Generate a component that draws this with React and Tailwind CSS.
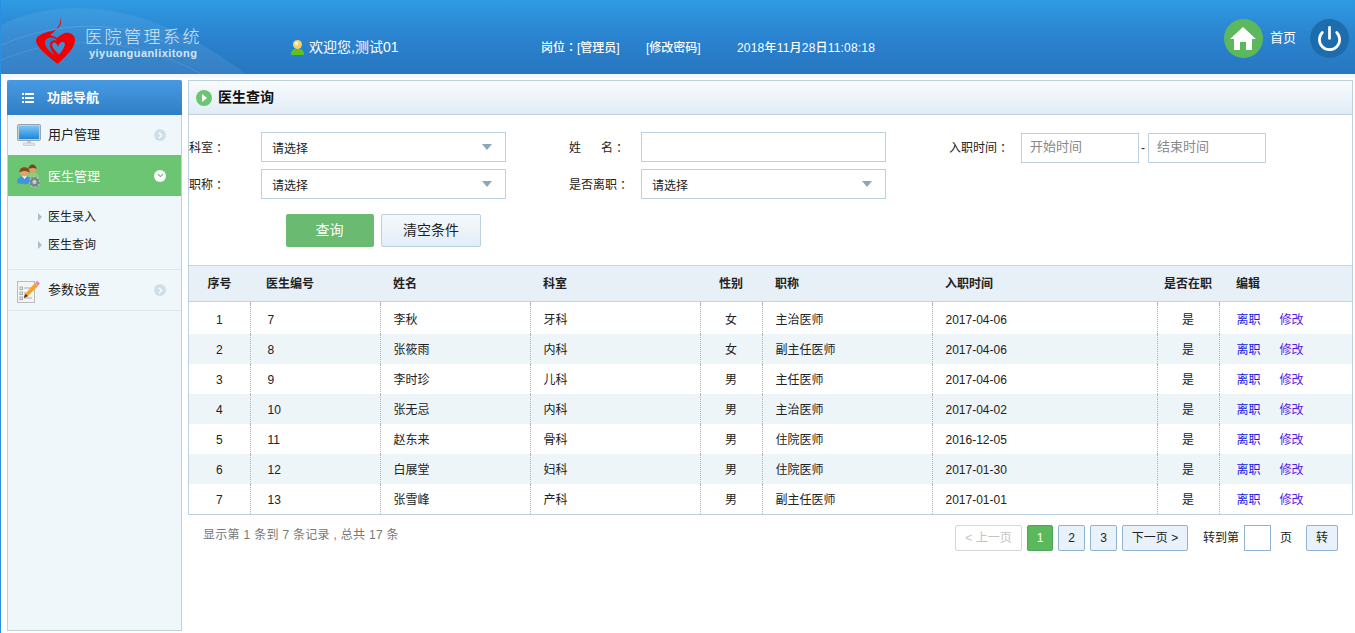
import { ChevronRight, ChevronDown, Power } from "lucide-react";

const rows = [
  [1, 7, "李秋", "牙科", "女", "主治医师", "2017-04-06"],
  [2, 8, "张筱雨", "内科", "女", "副主任医师", "2017-04-06"],
  [3, 9, "李时珍", "儿科", "男", "主任医师", "2017-04-06"],
  [4, 10, "张无忌", "内科", "男", "主治医师", "2017-04-02"],
  [5, 11, "赵东来", "骨科", "男", "住院医师", "2016-12-05"],
  [6, 12, "白展堂", "妇科", "男", "住院医师", "2017-01-30"],
  [7, 13, "张雪峰", "产科", "男", "副主任医师", "2017-01-01"],
];

function Logo() {
  return (
    <svg width="40" height="47" viewBox="4 6 40 47" className="shrink-0">
      <path fill="#f00000" d="M29 6C32 14 28 18 21 20 11 22 5 25 5 30 6 37 17 45 26.500 53 35 45 44 37 44 29 44 23 38 21 34 22 31 23 28 25 26 27 23 25 21 25 19 24 24 20 31 14 29 6z" />
      <path fill="#2a80c8" d="M25 28C20 25 13 27 14 33 15 37 19 41 24 45 19 38 18 33 20 31 22 29 24 29 26 31z" />
      <path fill="#3f8fd4" stroke="#f00000" strokeWidth="2.200" d="M27 33C25 29 20 30 20 34 20 38 24 41 28 45 32 41 35 37 35 33 35 29 29 29 27 33z" />
    </svg>
  );
}

function UserDot() {
  return (
    <svg width="13" height="15" viewBox="0 0 13 15">
      <path fill="#5cc418" d="M0 15c0-4 2-6 4-6h5c2 0 4 2 4 6z" />
      <circle cx="6.500" cy="4.500" r="4.500" fill="#f4cf6a" />
      <circle cx="5.500" cy="3.500" r="2" fill="#fdf0c0" />
    </svg>
  );
}

function MonitorIcon() {
  return (
    <svg width="24" height="22" viewBox="0 0 24 22">
      <rect x="0.500" y="0.500" width="23" height="16" rx="1" fill="#c4ccd4" stroke="#98a4ae" />
      <defs>
        <linearGradient id="scr" x1="0" y1="0" x2="0" y2="1">
          <stop offset="0" stopColor="#7cc6f6" />
          <stop offset="1" stopColor="#1e86dc" />
        </linearGradient>
      </defs>
      <rect x="2" y="2" width="20" height="13" fill="url(#scr)" />
      <rect x="10" y="17" width="4" height="2" fill="#c4ccd4" />
      <rect x="6" y="19" width="12" height="2.500" rx="1" fill="#e0e4e8" stroke="#b0b8c0" strokeWidth="0.500" />
    </svg>
  );
}

function DoctorsIcon() {
  return (
    <svg width="24" height="24" viewBox="0 0 24 24">
      <path d="M11 14c0-4 2-6 5-6s6 2 6 6z" fill="#8ecb7a" />
      <circle cx="15.500" cy="5" r="3.800" fill="#d9a06a" />
      <path d="M11.500 5c0-6 8-6 8 0-2-1.500-5-1.500-8 0z" fill="#7a4318" />
      <path d="M0 19c0-5 3-7 7.500-7s7.500 2 7.500 7c-4 1.500-11 1.500-15 0z" fill="#3f95dc" />
      <path d="M5 12l2.500 3 2.500-3z" fill="#fff" />
      <circle cx="7.500" cy="8" r="4.500" fill="#e0a672" />
      <path d="M2.500 8.500c-1-7 11-7 10 0-3-2-6-2-10 0z" fill="#8a4a18" />
      <circle cx="17.500" cy="18" r="5.500" fill="#fff" fillOpacity="0.500" />
      <circle cx="17.500" cy="18" r="3.400" fill="none" stroke="#78858c" strokeWidth="2.600" />
      <circle cx="17.500" cy="18" r="4.900" fill="none" stroke="#78858c" strokeWidth="1.200" strokeDasharray="1.800 2" />
    </svg>
  );
}

function NotesIcon() {
  return (
    <svg width="24" height="26" viewBox="0 0 24 26">
      <rect x="0.500" y="4.500" width="17" height="21" fill="#f4f4f2" stroke="#b8bcc0" />
      <g stroke="#a8acb0" fill="none">
        <rect x="3" y="10" width="2.500" height="2.500" />
        <rect x="3" y="15" width="2.500" height="2.500" />
        <rect x="3" y="20" width="2.500" height="2.500" />
        <path d="M7 11h7M7 16h3M7 21h8" />
      </g>
      <path d="M8 17L18 6l3 3-10 10-4 2z" fill="#f2a52a" />
      <path d="M18 6l2-2.500 3 3-2 2.500z" fill="#e58ab0" />
      <path d="M8 17l3 2-4 2z" fill="#333" />
    </svg>
  );
}

function Arrow({ open }) {
  return open ? (
    <span className="w-[12px] h-[12px] rounded-full bg-white flex items-center justify-center">
      <ChevronDown size={9} strokeWidth={3.5} className="text-[#6cc573]" />
    </span>
  ) : (
    <span className="w-[12px] h-[12px] rounded-full bg-[#cfdfe9] flex items-center justify-center">
      <ChevronRight size={9} strokeWidth={3.5} className="text-white" />
    </span>
  );
}

// TC 字形的全角标点是居中的，和原图一致
function Punct({ children }) {
  return <span className="font-['Noto_Sans_CJK_TC',sans-serif]">{children}</span>;
}

function Sidebar() {
  return (
    <aside className="w-[175px] shrink-0 h-[551px] bg-[#eff7fb] border-x border-b border-[#bcd0de] rounded-t-[2px]">
      <div className="-mx-px h-[35px] bg-gradient-to-b from-[#479ae2] to-[#2f7fc6] rounded-t-[2px] flex items-center pl-[15px] text-white text-[13px] font-bold">
        <svg width="12" height="10" viewBox="0 0 12 10" fill="#fff" className="mr-[13px]">
          <path d="M0 0h2v2H0zM3 0h9v2H3zM0 4h2v2H0zM3 4h9v2H3zM0 8h2v2H0zM3 8h9v2H3z" />
        </svg>
        功能导航
      </div>
      <div className="h-[40px] flex items-center pl-[9px] pr-[15px] text-[13px] text-[#222]">
        <span className="w-[24px] mr-[7px]"><MonitorIcon /></span>
        <span className="flex-1">用户管理</span>
        <Arrow />
      </div>
      <div className="h-[41px] bg-[#6cc573] flex items-center pl-[9px] pr-[15px] text-[13px] text-white">
        <span className="w-[24px] mr-[7px]"><DoctorsIcon /></span>
        <span className="flex-1 pt-[2px]">医生管理</span>
        <Arrow open />
      </div>
      <div className="h-[74px] border-b border-[#dde8ee] pt-[7px] text-[12px] text-[#222]">
        {["医生录入", "医生查询"].map((t) => (
          <div key={t} className="h-[28px] flex items-center pl-[30px]">
            <span className="w-0 h-0 border-y-[4px] border-y-transparent border-l-[4px] border-l-[#a9bdcb] mr-[6px]"></span>
            {t}
          </div>
        ))}
      </div>
      <div className="h-[41px] border-b border-[#dde8ee] flex items-center pl-[9px] pr-[15px] text-[13px] text-[#222]">
        <span className="w-[24px] mr-[7px]"><NotesIcon /></span>
        <span className="flex-1">参数设置</span>
        <Arrow />
      </div>
    </aside>
  );
}

function SelectBox() {
  return (
    <div className="w-[245px] h-[30px] bg-white border border-[#bcd0de] flex items-center pl-[10px] pr-[13px] text-[12px] text-[#222]">
      <span className="flex-1 pt-[3px]">请选择</span>
      <span className="w-0 h-0 border-x-[5px] border-x-transparent border-t-[6px] border-t-[#8ba6bb]"></span>
    </div>
  );
}

function FilterForm() {
  const label = "h-[30px] flex items-center pt-[2px] whitespace-pre";
  return (
    <div className="h-[150px]">
      <div className="pt-[17px] flex text-[12px] text-[#222]">
        <div className={label + " w-[72px]"}>科室<Punct>：</Punct></div>
        <SelectBox />
        <div className={label + " w-[135px] pl-[63px]"}>姓<span className="ml-[20px]">名</span><Punct>：</Punct></div>
        <div className="w-[245px] h-[30px] bg-white border border-[#bcd0de]"></div>
        <div className={label + " w-[135px] pl-[63px]"}>入职时间<Punct>：</Punct></div>
        <div className="w-[118px] h-[30px] mt-px border border-[#bcd0de] flex items-center pl-[8px] pb-[2px] text-[13px] text-[#888]">开始时间</div>
        <div className="w-[9px] mt-px h-[30px] flex items-center pl-[2px]">-</div>
        <div className="w-[118px] h-[30px] mt-px border border-[#bcd0de] flex items-center pl-[8px] pb-[2px] text-[13px] text-[#888]">结束时间</div>
      </div>
      <div className="pt-[7px] -mt-px flex text-[12px] text-[#222]">
        <div className={label + " w-[72px]"}>职称<Punct>：</Punct></div>
        <SelectBox />
        <div className={label + " w-[135px] pl-[63px]"}>是否离职<Punct>：</Punct></div>
        <SelectBox />
      </div>
      <div className="pt-[15px] pl-[97px] flex gap-[7px] text-[14px]">
        <div className="w-[88px] h-[33px] rounded-[2px] bg-[#6aba72] text-white flex items-center justify-center pr-[1px]">查询</div>
        <div className="w-[100px] h-[33px] rounded-[2px] border border-[#bcd0de] bg-gradient-to-b from-[#f6f9fc] to-[#e2edf6] text-[#222] flex items-center justify-center">清空条件</div>
      </div>
    </div>
  );
}

function DoctorTable() {
  const cell = "border-l border-dotted border-[#b4b4b4] pl-[13px] pt-[2px] text-left font-normal";
  const center = "border-l border-dotted border-[#b4b4b4] pt-[2px] text-center";
  return (
    <table className="w-full table-fixed border-collapse text-[12px] text-[#222]">
      <colgroup>
        <col className="w-[61px]" />
        <col className="w-[130px]" />
        <col className="w-[150px]" />
        <col className="w-[170px]" />
        <col className="w-[62px]" />
        <col className="w-[170px]" />
        <col className="w-[225px]" />
        <col className="w-[62px]" />
        <col />
      </colgroup>
      <thead>
        <tr className="h-[36px] bg-[#e7eff7] border-y border-[#c4d4e0] text-[#222]">
          <th className="font-bold text-center">序号</th>
          <th className="font-bold text-left pl-[16px]">医生编号</th>
          <th className="font-bold text-left pl-[13px]">姓名</th>
          <th className="font-bold text-left pl-[13px]">科室</th>
          <th className="font-bold text-center">性别</th>
          <th className="font-bold text-left pl-[13px]">职称</th>
          <th className="font-bold text-left pl-[13px]">入职时间</th>
          <th className="font-bold text-center">是否在职</th>
          <th className="font-bold text-left pl-[17px]">编辑</th>
        </tr>
      </thead>
      <tbody>
        <tr className="h-[2px]">
          <td className="p-0"></td>
          <td className="p-0 border-l border-dotted border-[#b4b4b4]"></td>
          <td className="p-0 border-l border-dotted border-[#b4b4b4]"></td>
          <td className="p-0 border-l border-dotted border-[#b4b4b4]"></td>
          <td className="p-0 border-l border-dotted border-[#b4b4b4]"></td>
          <td className="p-0 border-l border-dotted border-[#b4b4b4]"></td>
          <td className="p-0 border-l border-dotted border-[#b4b4b4]"></td>
          <td className="p-0 border-l border-dotted border-[#b4b4b4]"></td>
          <td className="p-0 border-l border-dotted border-[#b4b4b4]"></td>
        </tr>
        {rows.map((r, i) => (
          <tr key={r[0]} className={`h-[30px] ${i % 2 === 1 ? "bg-[#eef5f9]" : "bg-white"}`}>
            <td className="text-center pt-[2px]">{r[0]}</td>
            <td className={cell + " pl-[17px]"}>{r[1]}</td>
            <td className={cell}>{r[2]}</td>
            <td className={cell}>{r[3]}</td>
            <td className={center}>{r[4]}</td>
            <td className={cell}>{r[5]}</td>
            <td className={cell}>{r[6]}</td>
            <td className={center}>是</td>
            <td className={cell + " pl-[17px]"}>
              <a className="text-[#1a1ae6] mr-[19px]">离职</a>
              <a className="text-[#5a1ae6]">修改</a>
            </td>
          </tr>
        ))}
      </tbody>
    </table>
  );
}

function Pager() {
  const btn = "h-[26px] rounded-[2px] border border-[#8fb3d0] bg-[#e9f2fa] text-[#222] flex items-center justify-center";
  return (
    <div className="flex justify-between pt-[10px] pl-[15px] pr-[15px] text-[12px] text-[#222]">
      <div className="text-[#777] tracking-[0.3px] h-[20px] leading-[20px]">显示第 1 条到 7 条记录 , 总共 17 条</div>
      <div className="flex items-center gap-[5px] h-[26px]">
        <div className="w-[67px] h-[26px] rounded-[2px] border border-[#d6d6d6] text-[#c4c4c4] flex items-center justify-center">&lt; 上一页</div>
        <div className="w-[26px] h-[26px] rounded-[2px] border border-[#4da557] bg-[#5cb85c] text-white flex items-center justify-center">1</div>
        <div className={btn + " w-[27px]"}>2</div>
        <div className={btn + " w-[27px]"}>3</div>
        <div className={btn + " w-[66px]"}>下一页 &gt;</div>
        <span className="ml-[10px]">转到第</span>
        <div className="w-[27px] h-[26px] border border-[#8fb3d0] bg-white"></div>
        <span className="ml-[4px] mr-[9px]">页</span>
        <div className={btn + " w-[32px]"}>转</div>
      </div>
    </div>
  );
}

function Header() {
  return (
    <header className="relative h-[74px] overflow-hidden bg-gradient-to-b from-[#2f9ae3] via-[#2a83cf] to-[#2876c0] flex items-center text-white">
      <svg className="absolute left-0 top-0" width="260" height="74" viewBox="0 0 260 74" fill="none">
        <path d="M0 25C50 0 110 5 160 25c30 12 60 30 85 49H0z" fill="#fff" fillOpacity="0.07" />
        <path d="M0 45C60 20 120 20 170 45" stroke="#fff" strokeOpacity="0.12" />
        <path d="M0 60C60 35 130 35 200 74" stroke="#fff" strokeOpacity="0.1" />
      </svg>
      <div className="relative ml-[34px] mt-[7px]"><Logo /></div>
      <div className="relative ml-[10px] w-[161px] mt-[14px] text-[#d7e6f3]">
        <div className="text-[17px] leading-[19px] tracking-[2.5px] font-light">医院管理系统</div>
        <div className="text-[11px] leading-[13px] pl-[4px] tracking-[0.45px] font-bold">yiyuanguanlixitong</div>
      </div>
      <div className="relative ml-[45px] w-[250px] flex items-center gap-[5px] text-[14px] mt-[21px]">
        <UserDot />
        欢迎您,测试01
      </div>
      <div className="relative text-[12px] w-[105px] font-medium mt-[21px]">岗位<Punct>：</Punct>[管理员]</div>
      <div className="relative text-[12px] w-[91px] font-medium mt-[21px]">[修改密码]</div>
      <div className="relative text-[12px] tracking-[0.2px] font-medium mt-[21px]">2018年11月28日11:08:18</div>
      <div className="relative ml-auto mr-[6px] mt-[2px] flex items-center">
        <div className="w-[39px] h-[39px] rounded-full bg-[#5cb85c] flex items-center justify-center">
          <svg width="26" height="23" viewBox="0 0 26 23" fill="#fff">
            <path d="M13 0L0 12h4v11h6v-8h6v8h6V12h4z" />
          </svg>
        </div>
        <span className="text-[13px] ml-[7px] mr-[14px]">首页</span>
        <div className="w-[39px] h-[39px] rounded-full bg-[#1d6dac] flex items-center justify-center">
          <Power size={27} strokeWidth={2.4} />
        </div>
      </div>
    </header>
  );
}

export default function App() {
  return (
    <div className="w-[1355px] h-[633px] overflow-hidden bg-white border-l border-[#2a8fe0] font-['Liberation_Sans','Noto_Sans_CJK_SC',sans-serif]">
      <Header />
      <div className="flex pt-[6px] pl-[6px] pr-[2px] gap-[6px] bg-gradient-to-b from-[#eef4f9] to-white to-[6px]">
        <Sidebar />
        <main className="flex-1 min-w-0">
          <div className="border border-[#bcd0de]">
            <div className="h-[34px] bg-gradient-to-b from-[#f8fbfd] to-[#e0ecf5] border-b border-[#bcd0de] flex items-center pl-[7px] text-[14px] font-bold text-[#111]">
              <span className="w-[16px] h-[16px] rounded-full bg-[#6cc573] flex items-center justify-center mr-[6px]">
                <span className="w-0 h-0 ml-px border-y-[4px] border-y-transparent border-l-[5px] border-l-white"></span>
              </span>
              医生查询
            </div>
            <FilterForm />
            <DoctorTable />
          </div>
          <Pager />
        </main>
      </div>
    </div>
  );
}
